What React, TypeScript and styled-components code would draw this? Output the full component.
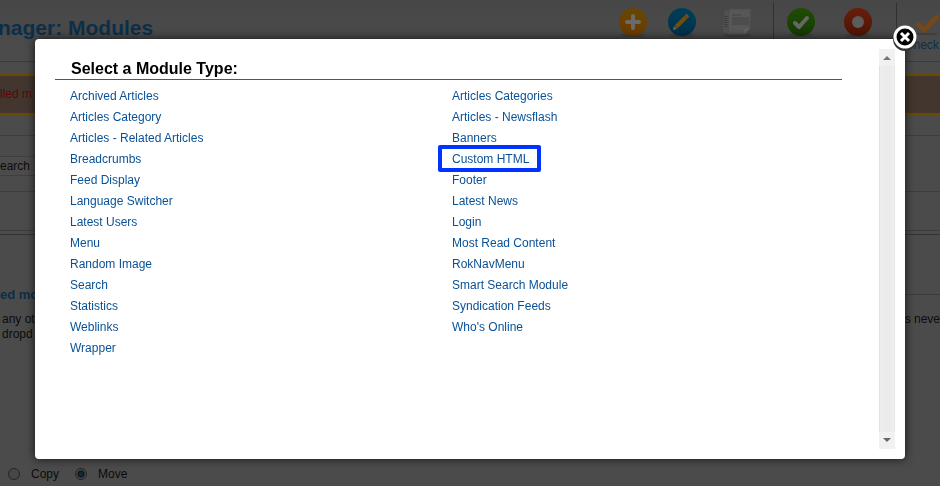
import React from "react";
import styled, { createGlobalStyle } from "styled-components";

const GlobalStyle = createGlobalStyle`
  *, *::before, *::after { box-sizing: border-box; }
  body {
    margin: 0;
    background: #4b4b4b;
    font-family: "Liberation Sans", Arial, sans-serif;
    font-size: 12px;
    color: #0c0c0c;
  }
`;

const Page = styled.div`
  display: flex;
  flex-direction: column;
  min-height: 100vh;
  overflow: hidden;
`;

const Header = styled.header`
  display: flex;
  justify-content: space-between;
  height: 62px;
  background: linear-gradient(#474747, #4c4c4c);
  border-bottom: 1px solid #3b3b3b;
`;

const PageTitle = styled.h1`
  margin: 0 0 0 -2px;
  padding-top: 16px;
  font-size: 21px;
  line-height: 24px;
  color: #0c2f49;
  white-space: nowrap;
`;

const Toolbar = styled.nav`
  display: flex;
  height: 61px;
`;

const Tool = styled.button<{ $width: number }>`
  display: flex;
  flex-direction: column;
  align-items: center;
  flex: none;
  width: ${(p) => p.$width}px;
  padding: 6px 0 0;
  border: 0;
  background: none;
  font: inherit;
  line-height: 14px;
  color: #0c2f49;
`;

const Separator = styled.span`
  width: 1px;
  height: 50px;
  margin-top: 3px;
  background: #303030;
`;

const ToolGroup = styled.div`
  display: flex;
  padding-right: 8px;
`;

const Warning = styled.div`
  margin-top: 11px;
  height: 43px;
  padding-top: 11px;
  border: solid #664b00;
  border-width: 3px 0;
  background: #43362f;
  color: #5c0606;
  line-height: 14px;
`;

const Filters = styled.section`
  margin-top: 19px;
  height: 57px;
  padding-top: 20px;
  border: solid #3d3d3d;
  border-width: 1px 0;
`;

const SearchButton = styled.button`
  width: 60px;
  height: 20px;
  padding: 0;
  border: 1px solid #3e3e3e;
  border-left: 0;
  background: #4c4c4c;
  color: #0c0c0c;
  font: inherit;
  line-height: 18px;
  text-align: left;
`;

const TableEdge = styled.div`
  height: 43px;
  border-bottom: 1px solid #333333;
  background: linear-gradient(#4b4b4b 38px, #3d3d3d 38px, #3d3d3d 39px, #4b4b4b 39px);
`;

const Batch = styled.section`
  margin-top: 51px;
`;

const BatchTitle = styled.div`
  display: flex;
  align-items: center;
  gap: 12px;
  height: 16px;
  color: #0c2f49;
  font-size: 13px;
  font-weight: bold;
  white-space: nowrap;

  &::after {
    content: "";
    flex: 1;
    height: 1px;
    background: #3b3b3b;
  }
`;

const BatchText = styled.p`
  display: flex;
  justify-content: space-between;
  margin: 0;
  padding: 0 0 0 2px;
  line-height: 15px;

  &:first-of-type { margin-top: 10px; }
`;

const Choices = styled.div`
  display: flex;
  gap: 16px;
  margin: 124px 0 5px 8px;
`;

const Choice = styled.label`
  display: flex;
  align-items: center;
  gap: 11px;
  line-height: 16px;
`;

const Radio = styled.input`
  appearance: none;
  width: 12px;
  height: 12px;
  margin: 0;
  border: 1px solid #262626;
  border-radius: 50%;
  background: #474747;

  &:checked {
    background: radial-gradient(circle, #10303c 1px, #08161d 3px, #444444 4px);
  }
`;

const Overlay = styled.div`
  position: fixed;
  inset: 0;
  display: flex;
  padding: 39px 35px 27px;
`;

const Dialog = styled.div`
  position: relative;
  display: flex;
  flex: 1;
  padding: 10px 10px 10px 20px;
  border-radius: 4px;
  background: #ffffff;
  box-shadow: 0 0 10px rgba(0, 0, 0, 0.75);
`;

const CloseButton = styled.button`
  position: absolute;
  top: -15px;
  right: -15px;
  width: 30px;
  height: 30px;
  padding: 0;
  border: 0;
  background: none;
`;

const Content = styled.div`
  flex: 1;
  margin-right: 37px;
`;

const DialogTitle = styled.h2`
  margin: 0 0 6px;
  padding: 9px 0 0 16px;
  border-bottom: 1px solid #555555;
  color: #000000;
  font-size: 16px;
  line-height: 21px;
`;

const Types = styled.div`
  display: grid;
  grid-template-columns: 382px 1fr;
  padding-left: 15px;
`;

const List = styled.ul`
  margin: 0;
  padding: 0;
  list-style: none;
`;

const ListItem = styled.li`
  height: 21px;
  line-height: 21px;
`;

const TypeLink = styled.a`
  color: #095197;
  text-decoration: none;
`;

const Marked = styled.span`
  position: relative;

  &::after {
    content: "";
    position: absolute;
    inset: -7px -12px -6px -14px;
    border: 4px solid #0033ff;
    border-radius: 2px;
    pointer-events: none;
  }
`;

const ScrollTrack = styled.div`
  display: flex;
  flex-direction: column;
  justify-content: space-between;
  width: 16px;
  background: linear-gradient(90deg, #e2e2e2 1px, #ededed 1px, #ebebeb 11px, #f0f0f0 15px, #e5e5e5 15px);
`;

const ScrollButton = styled.button`
  display: flex;
  align-items: center;
  justify-content: center;
  width: 16px;
  height: 17px;
  padding: 0;
  border: 0;
  background: #f1f1f1;
`;

const LEFT = [
  "Archived Articles", "Articles Category", "Articles - Related Articles", "Breadcrumbs",
  "Feed Display", "Language Switcher", "Latest Users", "Menu", "Random Image", "Search",
  "Statistics", "Weblinks", "Wrapper",
];
const RIGHT = [
  "Articles Categories", "Articles - Newsflash", "Banners", "Custom HTML", "Footer",
  "Latest News", "Login", "Most Read Content", "RokNavMenu", "Smart Search Module",
  "Syndication Feeds", "Who's Online",
];

function TypeList({ items }: { items: string[] }) {
  return (
    <List>
      {items.map((name) => {
        const link = <TypeLink href="#">{name}</TypeLink>;
        return <ListItem key={name}>{name === "Custom HTML" ? <Marked>{link}</Marked> : link}</ListItem>;
      })}
    </List>
  );
}

function Disc({ from, to, children }: { from: string; to: string; children: React.ReactNode }) {
  const id = "disc" + from.slice(1);
  return (
    <svg width="32" height="32" viewBox="0 0 32 32" aria-hidden="true">
      <defs>
        <linearGradient id={id} x1="0" y1="0" x2="0" y2="1">
          <stop offset="0" stopColor={from} />
          <stop offset="1" stopColor={to} />
        </linearGradient>
      </defs>
      <ellipse cx="16" cy="29" rx="12" ry="2" fill="#404040" />
      <circle cx="16" cy="16" r="14" fill={`url(#${id})`} />
      {children}
    </svg>
  );
}

export default function App() {
  return (
    <>
      <GlobalStyle />
      <Page>
        <Header>
          <PageTitle>nager: Modules</PageTitle>
          <Toolbar>
            <Tool $width={64} aria-label="New">
              <Disc from="#684600" to="#6b3b00">
                <path d="M16 10v12M10 16h12" stroke="#6a6a6a" strokeWidth="4" strokeLinecap="round" />
              </Disc>
            </Tool>
            <Tool $width={34} aria-label="Edit">
              <Disc from="#003f58" to="#002f49">
                <path d="M10 21L20 11" stroke="#704e0b" strokeWidth="4" />
                <path d="M20 11l2-2" stroke="#69493c" strokeWidth="4" />
                <path d="M7 24l1-4 3 3z" fill="#706453" />
              </Disc>
            </Tool>
            <Tool $width={74} aria-label="Duplicate">
              <svg width="32" height="32" viewBox="0 0 32 32" aria-hidden="true">
                <ellipse cx="17" cy="29" rx="14" ry="2" fill="#404040" />
                <path d="M4 4h15v24H2z" fill="#515151" stroke="#464646" />
                <path d="M6 10v12" stroke="#3a3a3a" strokeWidth="3" strokeDasharray="1 1" />
                <path d="M9 3h22l-1 19-5 6H8z" fill="#575757" stroke="#4c4c4c" />
                <path d="M12 9h9M12 12h17M12 14h17M12 16h17M12 18h17" stroke="#444444" />
                <path d="M30 22l-6 1 1 5z" fill="#626262" />
              </svg>
            </Tool>
            <Separator />
            <ToolGroup>
              <Tool $width={54} aria-label="Publish">
                <Disc from="#204d04" to="#143b02">
                  <path d="M10 17l4 4 8-9" fill="none" stroke="#666666" strokeWidth="4" strokeLinecap="round" strokeLinejoin="round" />
                </Disc>
              </Tool>
              <Tool $width={60} aria-label="Unpublish">
                <Disc from="#681e0a" to="#4d1306">
                  <circle cx="16" cy="16" r="6" fill="#5c5c5c" />
                </Disc>
              </Tool>
            </ToolGroup>
            <Separator />
            <Tool $width={43}>
              <svg width="43" height="32" viewBox="0 0 43 32" aria-hidden="true">
                <ellipse cx="29" cy="28" rx="12" ry="1" fill="#3d3d3d" />
                <path d="M20 17l7 7L41 10" fill="none" stroke="#75481a" strokeWidth="5" strokeLinejoin="round" />
              </svg>
              &nbsp;&nbsp;Check
            </Tool>
          </Toolbar>
        </Header>
        <Warning>lled m</Warning>
        <Filters>
          <SearchButton>earch</SearchButton>
        </Filters>
        <TableEdge />
        <Batch>
          <BatchTitle>ed mo</BatchTitle>
          <BatchText>
            <span>any oth</span>
            <span>is neve</span>
          </BatchText>
          <BatchText>dropd</BatchText>
          <Choices>
            <Choice><Radio type="radio" name="action" />Copy</Choice>
            <Choice><Radio type="radio" name="action" defaultChecked />Move</Choice>
          </Choices>
        </Batch>
      </Page>
      <Overlay>
        <Dialog role="dialog" aria-labelledby="dialog-title">
          <Content>
            <DialogTitle id="dialog-title">Select a Module Type:</DialogTitle>
            <Types>
              <TypeList items={LEFT} />
              <TypeList items={RIGHT} />
            </Types>
          </Content>
          <ScrollTrack>
            <ScrollButton aria-label="Scroll up">
              <svg width="8" height="5" viewBox="0 0 8 5"><path d="M0 5l4-4 4 4z" fill="#777" /></svg>
            </ScrollButton>
            <ScrollButton aria-label="Scroll down">
              <svg width="8" height="5" viewBox="0 0 8 5"><path d="M0 0h8L4 4z" fill="#666" /></svg>
            </ScrollButton>
          </ScrollTrack>
          <CloseButton aria-label="Close">
            <svg width="30" height="30" viewBox="0 0 30 30">
              <circle cx="15" cy="15" r="12" fill="#333333" />
              <circle cx="15" cy="13" r="10" fill="#000000" stroke="#ffffff" strokeWidth="3" />
              <path d="M11 9l8 8M19 9l-8 8" stroke="#ffffff" strokeWidth="3" />
            </svg>
          </CloseButton>
        </Dialog>
      </Overlay>
    </>
  );
}
